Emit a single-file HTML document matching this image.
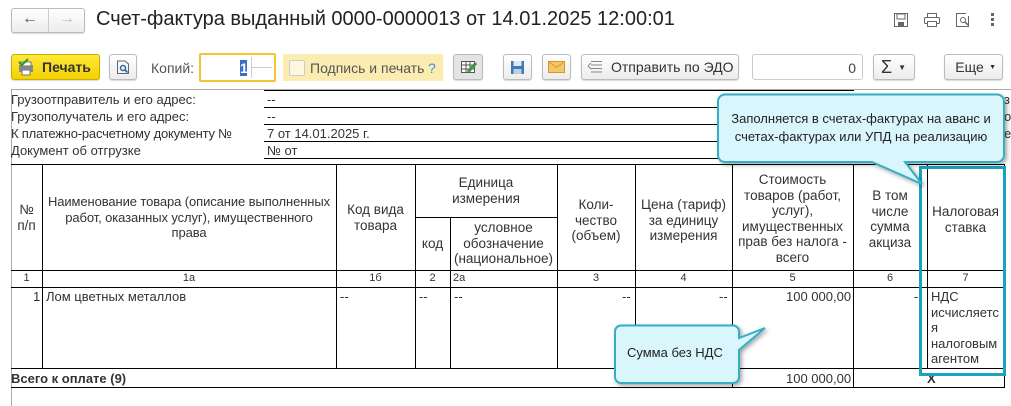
<!DOCTYPE html>
<html><head><meta charset="utf-8"><style>
*{box-sizing:border-box;margin:0;padding:0}
body{width:1011px;height:406px;background:#fff;font-family:"Liberation Sans",Arial,sans-serif;position:relative;overflow:hidden;color:#333}
.a{position:absolute}
.btn{position:absolute;border:1px solid #bbb;border-radius:3px;background:linear-gradient(#fff,#ececec);box-shadow:0 1px 1px rgba(0,0,0,.15);font-size:14px;color:#333;display:flex;align-items:center;justify-content:center}
.t{position:absolute;font-size:12px;color:#333;white-space:nowrap}
.d{position:absolute;font-size:13px;color:#333;white-space:nowrap}
.hl{position:absolute;height:1px;background:#000}
.vl{position:absolute;width:1px;background:#000}
.c{position:absolute;text-align:center;font-size:13.5px;line-height:15.5px;color:#333;white-space:nowrap}
.n{position:absolute;text-align:center;font-size:11px;line-height:15px;color:#333}
</style></head><body>
<div class="btn" style="left:11px;top:8px;width:74px;height:25px;"></div>
<div class="a" style="left:48px;top:9px;width:1px;height:23px;background:#ccc"></div>
<div class="t" style="left:22px;top:10px;font-size:16px;color:#555">&#8592;</div>
<div class="t" style="left:59px;top:10px;font-size:16px;color:#bbb">&#8594;</div>
<div class="t" style="left:96px;top:8px;font-size:20px;color:#222">Счет-фактура выданный 0000-0000013 от 14.01.2025 12:00:01</div>
<svg class="a" style="left:893px;top:12px" width="16" height="16"><rect x="1.5" y="1.5" width="13" height="13" fill="none" stroke="#666"/><rect x="4" y="2" width="8" height="5" fill="none" stroke="#666"/><rect x="5" y="10" width="6" height="4" fill="#666"/></svg>
<svg class="a" style="left:923px;top:12px" width="18" height="16"><rect x="4.5" y="1.5" width="9" height="4" fill="none" stroke="#666"/><rect x="1.5" y="5.5" width="15" height="6" rx="1" fill="none" stroke="#666"/><rect x="4.5" y="9.5" width="9" height="5" fill="#fff" stroke="#666"/></svg>
<svg class="a" style="left:955px;top:12px" width="16" height="16"><path d="M11 1.5H1.5v13h12V4" fill="none" stroke="#666"/><circle cx="8" cy="8" r="2.5" fill="none" stroke="#666"/><path d="M10 10l3 3" stroke="#666" stroke-width="1.5"/></svg>
<div class="a" style="left:991px;top:13px;width:3px;height:3px;background:#666;box-shadow:0 5px 0 #666,0 10px 0 #666"></div>
<div class="btn" style="left:11px;top:54px;width:89px;height:26px;background:linear-gradient(#ffe93a,#f3d200);border-color:#c9ad00;font-weight:bold;justify-content:flex-start;padding-left:30px">Печать</div>
<svg class="a" style="left:17px;top:58px" width="18" height="18"><rect x="2" y="7" width="14" height="7" fill="#8a8a8a"/><rect x="4" y="4" width="10" height="4" fill="#fff" stroke="#777"/><rect x="5" y="12" width="8" height="5" fill="#fff" stroke="#777"/><path d="M2 4l3 3 6-6" stroke="#2a9a2a" stroke-width="2" fill="none"/></svg>
<div class="btn" style="left:109px;top:54px;width:28px;height:26px;"></div>
<svg class="a" style="left:116px;top:60px" width="14" height="15"><path d="M9 1H1.5v12.5h11V4z" fill="none" stroke="#666"/><circle cx="7" cy="8" r="2.5" fill="none" stroke="#2b6aa8" stroke-width="1.5"/><path d="M9 10l2.5 2.5" stroke="#2b6aa8" stroke-width="1.8"/></svg>
<div class="t" style="left:151px;top:60px;font-size:14px;color:#555">Копий:</div>
<div class="a" style="left:199px;top:53px;width:77px;height:29px;border:2px solid #f4c430;border-radius:2px;background:#fff"></div>
<div class="a" style="left:240px;top:60px;width:7px;height:16px;background:#3a6fc4;color:#fff;font-size:14px;line-height:16px;text-align:center;font-weight:bold">1</div>
<div class="a" style="left:251px;top:57px;width:1px;height:21px;background:#ccc"></div>
<div class="a" style="left:252px;top:67px;width:20px;height:1px;background:#ccc"></div>
<div class="a" style="left:283px;top:54px;width:160px;height:27px;background:#fbedb2"></div>
<div class="a" style="left:289px;top:60px;width:16px;height:16px;border:1px solid #ccc;background:#fdf7e0;border-radius:2px"></div>
<div class="t" style="left:310px;top:60px;font-size:14px;color:#555">Подпись и печать</div>
<div class="t" style="left:428px;top:60px;font-size:14px;color:#3a8fd8">?</div>
<div class="btn" style="left:453px;top:54px;width:30px;height:26px;background:#e4e4e4"></div>
<svg class="a" style="left:460px;top:59px" width="18" height="16"><rect x="1.5" y="2.5" width="13" height="11" fill="#fff" stroke="#555"/><path d="M1.5 6h13M1.5 10h13M6 2.5v11M10 2.5v11" stroke="#555"/><path d="M8 13l8-9" stroke="#3b9a3b" stroke-width="3"/></svg>
<div class="btn" style="left:503px;top:54px;width:29px;height:26px;"></div>
<svg class="a" style="left:510px;top:60px" width="15" height="15"><rect x="1" y="1" width="13" height="13" fill="#3e79b8"/><rect x="3.5" y="1" width="8" height="5" fill="#dfe9f5"/><rect x="3.5" y="9" width="8" height="5" fill="#b9cde4"/></svg>
<div class="btn" style="left:542px;top:54px;width:29px;height:26px;"></div>
<svg class="a" style="left:548px;top:61px" width="17" height="12"><rect x=".5" y=".5" width="16" height="11" fill="#f6c766" stroke="#d9962a"/><path d="M.5 .5l8 6 8-6" fill="none" stroke="#d9962a"/></svg>
<div class="btn" style="left:581px;top:54px;width:158px;height:26px;justify-content:flex-start;padding-left:29px">Отправить по ЭДО</div>
<svg class="a" style="left:587px;top:60px" width="17" height="15"><path d="M4 1.5h11M4 5h11M4 8.5h11M4 12h11" stroke="#888"/><path d="M1 6l3-3M1 6l3 3" stroke="#888"/></svg>
<div class="a" style="left:752px;top:54px;width:111px;height:26px;border:1px solid #ccc;border-radius:3px;font-size:14px;text-align:right;padding:5px 6px;color:#444">0</div>
<div class="btn" style="left:873px;top:54px;width:42px;height:26px;font-size:18px;justify-content:flex-start;padding-left:7px">Σ<span style="font-size:8px;margin-left:6px">▼</span></div>
<div class="btn" style="left:944px;top:54px;width:59px;height:26px;padding-right:8px">Еще<span class="a" style="right:6px;top:9px;font-size:7px">▼</span></div>
<div class="a" style="left:11px;top:89px;width:1000px;height:1px;background:#aaa"></div>
<div class="a" style="left:11px;top:89px;width:1px;height:317px;background:#aaa"></div>
<div class="hl" style="left:264px;top:90px;width:590px"></div>
<div class="hl" style="left:264px;top:107px;width:590px"></div>
<div class="hl" style="left:264px;top:124px;width:590px"></div>
<div class="hl" style="left:264px;top:141px;width:590px"></div>
<div class="hl" style="left:264px;top:158px;width:590px"></div>
<div class="d" style="left:11px;top:92px">Грузоотправитель и его адрес:</div>
<div class="d" style="left:11px;top:109px">Грузополучатель и его адрес:</div>
<div class="d" style="left:11px;top:126px;letter-spacing:-.2px">К платежно-расчетному документу №</div>
<div class="d" style="left:11px;top:143px">Документ об отгрузке</div>
<div class="d" style="left:267px;top:92px">--</div>
<div class="d" style="left:267px;top:109px">--</div>
<div class="d" style="left:267px;top:126px">7 от 14.01.2025 г.</div>
<div class="d" style="left:267px;top:143px">№ от</div>
<div class="d" style="left:1004px;top:92px">з</div>
<div class="d" style="left:1004px;top:109px">о</div>
<div class="d" style="left:1004px;top:126px">е</div>
<div class="hl" style="left:11px;top:164px;width:994px"></div>
<div class="hl" style="left:415px;top:217px;width:142px"></div>
<div class="hl" style="left:11px;top:270px;width:994px"></div>
<div class="hl" style="left:11px;top:287px;width:994px"></div>
<div class="hl" style="left:11px;top:368px;width:994px"></div>
<div class="hl" style="left:11px;top:387px;width:994px"></div>
<div class="vl" style="left:42px;top:164px;height:204px"></div>
<div class="vl" style="left:336px;top:164px;height:204px"></div>
<div class="vl" style="left:415px;top:164px;height:204px"></div>
<div class="vl" style="left:450px;top:217px;height:151px"></div>
<div class="vl" style="left:557px;top:164px;height:204px"></div>
<div class="vl" style="left:635px;top:164px;height:204px"></div>
<div class="vl" style="left:732px;top:164px;height:223px"></div>
<div class="vl" style="left:853px;top:164px;height:223px"></div>
<div class="vl" style="left:927px;top:164px;height:204px"></div>
<div class="vl" style="left:1004px;top:164px;height:223px"></div>
<div class="c" style="left:11px;top:202px;width:31px">№<br>п/п</div>
<div class="c" style="left:42px;top:194px;width:294px;font-size:13px;letter-spacing:-.1px">Наименование товара (описание выполненных<br>работ, оказанных услуг), имущественного<br>права</div>
<div class="c" style="left:336px;top:202px;width:79px">Код вида<br>товара</div>
<div class="c" style="left:415px;top:175px;width:142px">Единица<br>измерения</div>
<div class="c" style="left:415px;top:236px;width:35px">код</div>
<div class="c" style="left:450px;top:220px;width:107px">условное<br>обозначение<br>(национальное)</div>
<div class="c" style="left:557px;top:197px;width:78px">Коли-<br>чество<br>(объем)</div>
<div class="c" style="left:635px;top:197px;width:97px">Цена (тариф)<br>за единицу<br>измерения</div>
<div class="c" style="left:732px;top:172px;width:121px">Стоимость<br>товаров (работ,<br>услуг),<br>имущественных<br>прав без налога -<br>всего</div>
<div class="c" style="left:853px;top:188px;width:74px">В том<br>числе<br>сумма<br>акциза</div>
<div class="c" style="left:927px;top:204px;width:77px">Налоговая<br>ставка</div>
<div class="n" style="left:11px;top:271px;width:31px">1</div>
<div class="n" style="left:42px;top:271px;width:294px">1а</div>
<div class="n" style="left:336px;top:271px;width:79px">1б</div>
<div class="n" style="left:415px;top:271px;width:35px">2</div>
<div class="n" style="left:450px;top:271px;width:107px;text-align:left;padding-left:3px">2а</div>
<div class="n" style="left:557px;top:271px;width:78px">3</div>
<div class="n" style="left:635px;top:271px;width:97px">4</div>
<div class="n" style="left:732px;top:271px;width:121px">5</div>
<div class="n" style="left:853px;top:271px;width:74px">6</div>
<div class="n" style="left:927px;top:271px;width:77px">7</div>
<div class="d" style="left:33px;top:289px">1</div>
<div class="d" style="left:46px;top:289px">Лом цветных металлов</div>
<div class="d" style="left:340px;top:289px">--</div>
<div class="d" style="left:419px;top:289px">--</div>
<div class="d" style="left:454px;top:289px">--</div>
<div class="d" style="left:622px;top:289px">--</div>
<div class="d" style="left:719px;top:289px">--</div>
<div class="d" style="left:786px;top:289px">100 000,00</div>
<div class="d" style="left:914px;top:289px">--</div>
<div class="a" style="left:931px;top:289px;font-size:13px;line-height:15.5px;color:#333">НДС<br>исчисляетс<br>я<br>налоговым<br>агентом</div>
<div class="d" style="left:11px;top:371px;font-weight:bold">Всего к оплате (9)</div>
<div class="d" style="left:786px;top:371px">100 000,00</div>
<div class="d" style="left:927px;top:371px;font-weight:bold">Х</div>
<div class="a" style="left:919px;top:166px;width:87px;height:210px;border:3px solid #1aa3bf"></div>
<svg class="a" style="left:0;top:0" width="1011" height="406">
<defs><filter id="s"><feDropShadow dx="2" dy="2" stdDeviation="2" flood-opacity=".35"/></filter></defs>
<path d="M725 94.5H997a7 7 0 0 1 7 7V155a7 7 0 0 1-7 7H905L922 184 872 162H725a7 7 0 0 1-7-7V101.5a7 7 0 0 1 7-7z" fill="#d9f6fc" stroke="#35aec3" stroke-width="2" filter="url(#s)"/>
<path d="M621 325.5H733a6 6 0 0 1 6 6V338L765 328 739 350V377a6 6 0 0 1-6 6H621a6 6 0 0 1-6-6V331.5a6 6 0 0 1 6-6z" fill="#d9f6fc" stroke="#35aec3" stroke-width="2" filter="url(#s)"/>
</svg>
<div class="c" style="left:718px;top:110px;width:286px;font-size:13px;color:#222;line-height:18px">Заполняется в счетах-фактурах на аванс и<br>счетах-фактурах или УПД на реализацию</div>
<div class="t" style="left:627px;top:345px;font-size:13px;color:#222">Сумма без НДС</div>
</body></html>
